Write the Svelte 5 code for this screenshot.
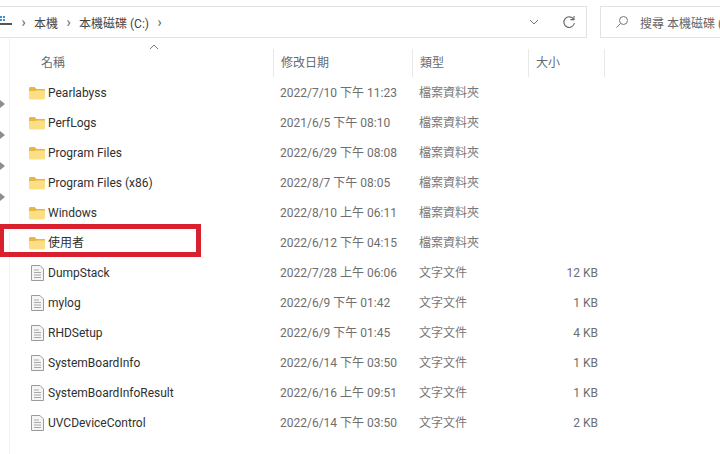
<script>
  const rows = [
    { name: 'Pearlabyss', date: '2022/7/10 下午 11:23', type: '檔案資料夾', size: '', folder: true },
    { name: 'PerfLogs', date: '2021/6/5 下午 08:10', type: '檔案資料夾', size: '', folder: true },
    { name: 'Program Files', date: '2022/6/29 下午 08:08', type: '檔案資料夾', size: '', folder: true },
    { name: 'Program Files (x86)', date: '2022/8/7 下午 08:05', type: '檔案資料夾', size: '', folder: true },
    { name: 'Windows', date: '2022/8/10 上午 06:11', type: '檔案資料夾', size: '', folder: true },
    { name: '使用者', date: '2022/6/12 下午 04:15', type: '檔案資料夾', size: '', folder: true },
    { name: 'DumpStack', date: '2022/7/28 上午 06:06', type: '文字文件', size: '12 KB', folder: false },
    { name: 'mylog', date: '2022/6/9 下午 01:42', type: '文字文件', size: '1 KB', folder: false },
    { name: 'RHDSetup', date: '2022/6/9 下午 01:45', type: '文字文件', size: '4 KB', folder: false },
    { name: 'SystemBoardInfo', date: '2022/6/14 下午 03:50', type: '文字文件', size: '1 KB', folder: false },
    { name: 'SystemBoardInfoResult', date: '2022/6/16 上午 09:51', type: '文字文件', size: '1 KB', folder: false },
    { name: 'UVCDeviceControl', date: '2022/6/14 下午 03:50', type: '文字文件', size: '2 KB', folder: false }
  ];
</script>

<div class="window">
  <div class="toolbar">
    <div class="address">
      <svg class="pc" width="13" height="16" viewBox="0 0 13 16">
        <rect x="0" y="2" width="2" height="2" fill="#3d8fd0" />
        <rect x="3" y="2" width="2" height="2" fill="#3d8fd0" />
        <rect x="0" y="5" width="2" height="2" fill="#3d8fd0" />
        <rect x="3" y="5" width="2" height="2" fill="#3d8fd0" />
        <rect x="0" y="9" width="12" height="2" fill="#555" />
      </svg>
      <span class="chev">›</span>
      <span class="crumb">本機</span>
      <span class="chev">›</span>
      <span class="crumb">本機磁碟 (C:)</span>
      <span class="chev">›</span>
      <span class="spacer"></span>
      <svg class="down" width="12" height="8" viewBox="0 0 12 8">
        <path d="M2 2l4 4 4-4" fill="none" stroke="#777" stroke-width="1" />
      </svg>
      <svg class="refresh" width="14" height="14" viewBox="0 0 14 14">
        <path d="M11.6 4.2A5.3 5.3 0 1 0 12.4 8" fill="none" stroke="#666" stroke-width="1.1" />
        <path d="M12 1v3.6H8.400" fill="none" stroke="#666" stroke-width="1.1" />
      </svg>
    </div>
    <div class="search">
      <svg width="14" height="14" viewBox="0 0 14 14">
        <circle cx="8.500" cy="5.500" r="4" fill="none" stroke="#777" stroke-width="1" />
        <path d="M5.500 8.500L1.500 12.500" stroke="#777" stroke-width="1" />
      </svg>
      <span>搜尋 本機磁碟 (C:)</span>
    </div>
  </div>

  <div class="body">
    <div class="tree">
      {#each [0, 1, 2, 3] as i (i)}
        <span class="arrow"></span>
      {/each}
    </div>
    <div class="list">
      <svg class="sort" width="10" height="6" viewBox="0 0 10 6">
        <path d="M1 5l4-4 4 4" fill="none" stroke="#777" stroke-width="1" />
      </svg>
      <div class="head">
        <span class="h-name">名稱</span>
        <span class="h-cell">修改日期</span>
        <span class="h-cell">類型</span>
        <span class="h-cell h-size">大小</span>
      </div>
      {#each rows as row (row.name)}
        <div class="row">
          <span class="name">
            <span class="icon">
              {#if row.folder}
                <svg width="16" height="14" viewBox="0 0 16 14">
                  <path d="M0 2.500Q0 1 1.500 1H5.500L7.500 3H14.500Q16 3 16 4.500V12Q16 13.500 14.500 13.500H1.500Q0 13.500 0 12Z" fill="#fadf85" />
                  <path d="M0 2.500Q0 1 1.500 1H5.500L7.500 3H16V4.500H7L5.500 5H0Z" fill="#e9b63f" />
                </svg>
              {:else}
                <svg width="13" height="16" viewBox="0 0 13 16">
                  <path d="M.5.500H9L12.500 4V15.500H.5Z" fill="#f5f5f5" stroke="#9a9a9a" />
                  <path d="M3 5H8M3 7.500H10M3 10H10M3 12.500H10" stroke="#a8a8a8" />
                </svg>
              {/if}
            </span>
            <span>{row.name}</span>
          </span>
          <span class="date">{row.date}</span>
          <span class="type">{row.type}</span>
          <span class="size">{row.size}</span>
        </div>
      {/each}
      <div class="marker"></div>
    </div>
  </div>
</div>

<style>
  :global(body) {
    margin: 0;
    background: #fff;
  }

  .window {
    width: 720px;
    height: 454px;
    overflow: hidden;
    background: #fff;
    color: #333;
    font-family: Roboto, "Noto Sans CJK TC", sans-serif;
    font-size: 12px;
  }

  .toolbar {
    display: flex;
    gap: 13px;
    height: 32px;
    padding-top: 6px;
  }

  .address {
    display: flex;
    align-items: center;
    flex: 0 0 587px;
    box-sizing: border-box;
    border: 1px solid #e3e3e3;
    border-left: 0;
    color: #444;
  }

  .pc {
    flex: none;
  }

  .chev {
    width: 21px;
    text-align: center;
    color: #666;
    font-size: 14px;
    line-height: 1;
  }

  .crumb {
    white-space: nowrap;
    font-size: 12px;
  }

  .spacer {
    flex: 1;
  }

  .down {
    margin-right: 22px;
  }

  .refresh {
    margin-right: 10px;
  }

  .search {
    display: flex;
    align-items: center;
    gap: 11px;
    flex: 1;
    box-sizing: border-box;
    padding-left: 14px;
    border: 1px solid #e3e3e3;
    border-right: 0;
    color: #666;
    font-size: 12px;
    white-space: nowrap;
    overflow: hidden;
  }

  .search svg {
    flex: none;
  }

  .body {
    display: flex;
    height: 416px;
  }

  .tree {
    display: flex;
    flex-direction: column;
    gap: 23px;
    flex: 0 0 10px;
    box-sizing: border-box;
    padding-top: 62px;
    border-right: 1px solid #f1f1f1;
  }

  .arrow {
    width: 0;
    height: 0;
    border-top: 4px solid transparent;
    border-bottom: 4px solid transparent;
    border-left: 5px solid #8d8d8d;
  }

  .list {
    position: relative;
    flex: 1;
  }

  .sort {
    position: absolute;
    left: 139px;
    top: 6px;
  }

  .head {
    display: grid;
    grid-template-columns: 263px 139px 116px 77px;
    height: 26px;
    margin-top: 11px;
    margin-bottom: 3px;
    color: #5f6b76;
    font-size: 12px;
    line-height: 28px;
  }

  .h-name {
    padding-left: 31px;
  }

  .h-cell {
    box-sizing: border-box;
    padding-left: 7px;
    border-left: 1px solid #e8e8e8;
  }

  .h-size {
    border-right: 1px solid #e8e8e8;
  }

  .row {
    display: grid;
    grid-template-columns: 263px 139px 116px 70px;
    align-items: center;
    height: 30px;
    line-height: 16px;
    white-space: nowrap;
  }

  .name {
    display: flex;
    align-items: center;
    gap: 3px;
    padding-left: 19px;
    color: #2f2f2f;
  }

  .icon {
    display: flex;
    justify-content: center;
    width: 16px;
  }

  .date {
    padding-left: 7px;
    color: #6e6e6e;
  }

  .type {
    padding-left: 7px;
    color: #777;
    font-size: 12px;
  }

  .size {
    text-align: right;
    color: #6e6e6e;
  }

  .marker {
    position: absolute;
    left: -11px;
    top: 186px;
    width: 202px;
    height: 33px;
    box-sizing: border-box;
    border: 5px solid #d8202e;
  }
</style>
